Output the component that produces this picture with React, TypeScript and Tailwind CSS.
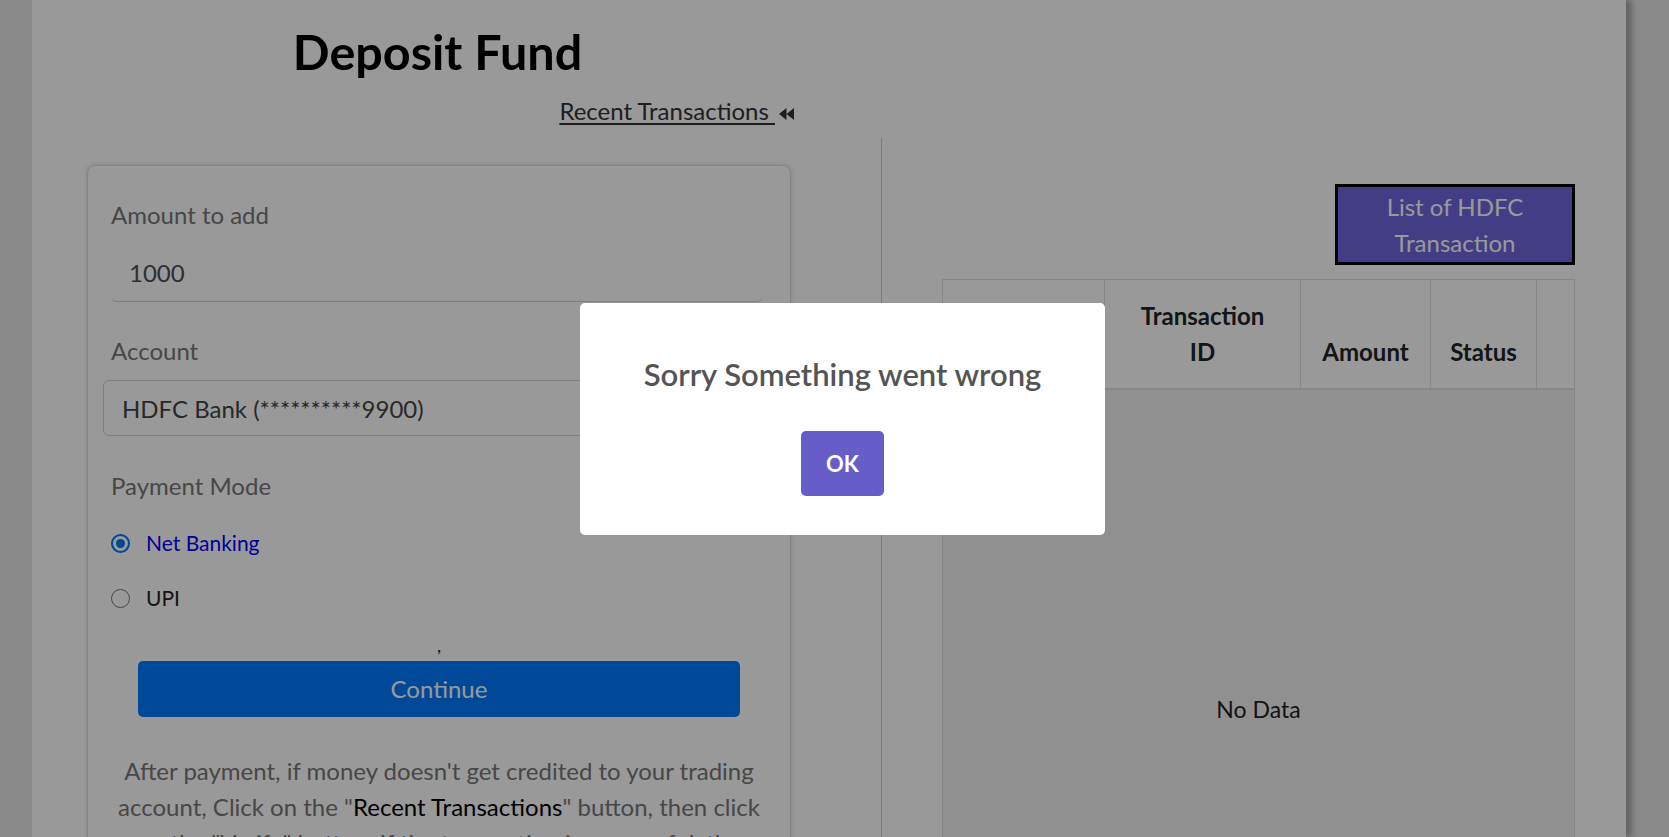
import React from "react";

function BackIcon() {
  return (
    <svg width="15" height="12" viewBox="0 0 15 12" className="ml-[4px] mt-[15px] shrink-0">
      <path d="M7.5 0 L0 6 L7.5 12 Z" fill="#333" />
      <path d="M15 0 L7.5 6 L15 12 Z" fill="#333" />
    </svg>
  );
}

export default function App() {
  return (
    <div className="relative h-[837px] w-full overflow-hidden bg-[#e6e6e6] font-['Lato',sans-serif]">
      <div className="ml-[32px] flex h-full w-[1594px] bg-white shadow-[6px_0_6px_rgba(0,0,0,0.28)]">
        {/* left column */}
        <div className="w-[849px] shrink-0 pl-[55px] pr-[87px]">
          <h1 className="mt-[27px] pr-[6px] text-center text-[48.5px] font-bold leading-[48px] text-black">Deposit Fund</h1>
          <div className="mt-[18px] flex h-[36px] items-start justify-end">
            <span className="whitespace-pre text-[24px] leading-[36px] text-[#333] underline underline-offset-[3px]">Recent Transactions </span>
            <BackIcon />
          </div>
          <div className="mt-[36px] w-[704px] rounded-[8px] border border-[#dcdcdc] px-[23px] pt-[31px] shadow-[0_0_5px_rgba(0,0,0,0.15)]">
            <div className="text-[24px] leading-[36px] text-[#777]">Amount to add</div>
            <div className="mr-[4px] h-[69px] rounded-[6px] border-b border-[#ced4da] pl-[18px] pt-[22px] text-[24px] leading-[36px] text-[#495057]">1000</div>
            <div className="mt-[31px] text-[24px] leading-[36px] text-[#777]">Account</div>
            <div className="-mx-[8px] mt-[11px] h-[56px] rounded-[6px] border border-[#ced4da] pl-[18px] pt-[10px] text-[24px] leading-[36px] text-[#444]">HDFC Bank (**********9900)</div>
            <div className="mt-[32px] text-[24px] leading-[36px] text-[#777]">Payment Mode</div>
            <div className="mt-[24px] flex h-[30px] items-center">
              <div className="flex h-[19px] w-[19px] items-center justify-center rounded-full border-2 border-[#0075ff]">
                <div className="h-[9px] w-[9px] rounded-full bg-[#0075ff]" />
              </div>
              <span className="ml-[16px] text-[21px] leading-[30px] text-[#0000ff]">Net Banking</span>
            </div>
            <div className="mt-[25px] flex h-[30px] items-center">
              <div className="h-[19px] w-[19px] rounded-full border-[1.5px] border-[#767676]" />
              <span className="ml-[16px] text-[21px] leading-[30px] text-[#222]">UPI</span>
            </div>
            <div className="mt-[19px] h-[27px] text-center text-[18px] leading-[27px] text-[#222]">,</div>
            <button className="mx-auto mt-[2px] block h-[56px] w-[602px] rounded-[5px] bg-[#007bff] text-[24px] leading-[36px] text-white">Continue</button>
            <p className="mt-[36px] whitespace-nowrap text-center text-[24px] leading-[36px] text-[#777]">
              After payment, if money doesn't get credited to your trading
              <br />
              account, Click on the "<span className="text-black">Recent Transactions</span>" button, then click
              <br />
              on the "Verify" button. If the transaction is successful, the
              <br />
              amount will be credited to your account.
            </p>
          </div>
        </div>
        {/* right column */}
        <div className="mt-[138px] flex-1 border-l border-[#cccccc] pl-[60px] pr-[52px] pt-[46px]">
          <div className="flex justify-end">
            <button className="h-[81px] w-[240px] border-[3px] border-black bg-[#7066e0] text-[24px] leading-[36px] text-white">
              List of HDFC
              <br />
              Transaction
            </button>
          </div>
          <table className="mt-[14px] w-[632px] table-fixed border-collapse text-[24px] leading-[36px] text-[#212529]">
            <colgroup>
              <col className="w-[162px]" />
              <col className="w-[196px]" />
              <col className="w-[130px]" />
              <col className="w-[106px]" />
              <col className="w-[38px]" />
            </colgroup>
            <thead>
              <tr>
                <th className="border border-b-2 border-[#dee2e6] px-[12px] py-[18px] align-bottom font-bold"></th>
                <th className="border border-b-2 border-[#dee2e6] px-[12px] py-[18px] align-bottom font-bold">
                  Transaction
                  <br />
                  ID
                </th>
                <th className="border border-b-2 border-[#dee2e6] px-[12px] py-[18px] align-bottom font-bold">Amount</th>
                <th className="border border-b-2 border-[#dee2e6] px-[12px] py-[18px] align-bottom font-bold">Status</th>
                <th className="border border-b-2 border-[#dee2e6] px-0 py-[18px] align-bottom font-bold"></th>
              </tr>
            </thead>
            <tbody>
              <tr>
                <td colSpan={5} className="h-[638px] border-x border-[#dee2e6] bg-[#f0f0f0] text-center align-middle text-[23px] text-[#222]">No Data</td>
              </tr>
            </tbody>
          </table>
        </div>
      </div>
      <div className="absolute inset-0 bg-black/40" />
      <div className="absolute inset-0 flex items-center justify-center pl-[16px]">
        <div className="flex h-[232px] w-[525px] flex-col items-center rounded-[5px] bg-white">
          <div className="mt-[53px] whitespace-nowrap text-[31px] font-semibold leading-[36px] text-[#545454]">Sorry Something went wrong</div>
          <button className="mt-[39px] h-[65px] w-[83px] rounded-[5px] bg-[#675dc9] text-[22px] font-bold text-white">OK</button>
        </div>
      </div>
    </div>
  );
}
